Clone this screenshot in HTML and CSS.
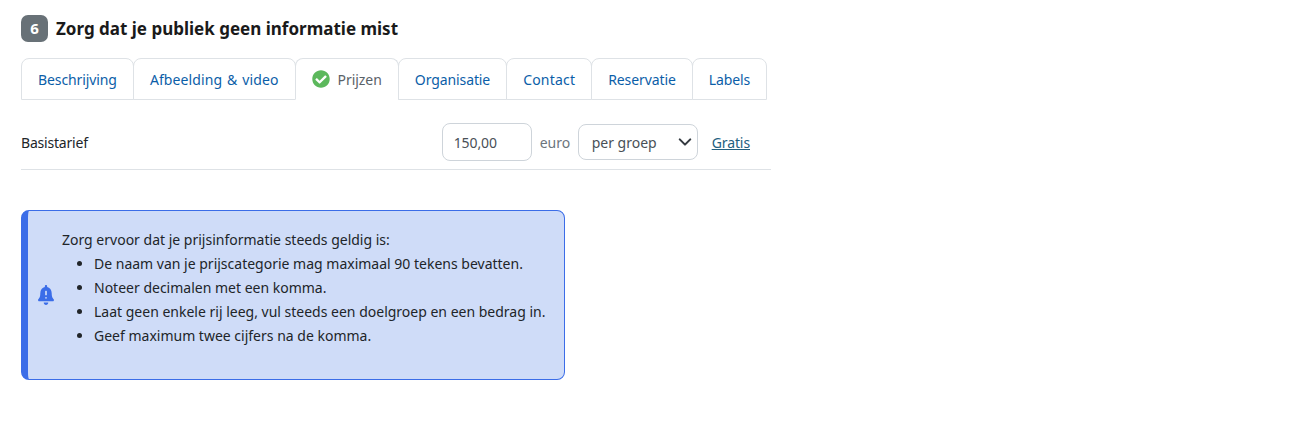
FILE: index.html
```html
<!DOCTYPE html>
<html>
<head>
    <title>Prijzen</title>
    <link rel="stylesheet" href="styles.css">
</head>
<body>

    <div class="container">
        <h2 class="step-title"><span class="step-badge">6</span>Zorg dat je publiek geen informatie mist</h2>

        <ul class="tabs">
            <li class="tab"><a href="#">Beschrijving</a></li>
            <li class="tab tab-media"><a href="#">Afbeelding &amp; video</a></li>
            <li class="tab active">
                <a href="#">
                    <svg class="check-icon" viewBox="0 0 512 512"><path fill="#5cb85c" d="M504 256c0 137-111 248-248 248S8 393 8 256 119 8 256 8s248 111 248 248zM227.3 387.3l184-184c6.2-6.2 6.2-16.4 0-22.6l-22.6-22.6c-6.2-6.2-16.4-6.2-22.6 0L216 308.1l-70.1-70.1c-6.2-6.2-16.4-6.2-22.6 0l-22.6 22.6c-6.2 6.2-6.2 16.4 0 22.6l104 104c6.2 6.2 16.4 6.2 22.6 0z"/></svg>
                    Prijzen
                </a>
            </li>
            <li class="tab"><a href="#">Organisatie</a></li>
            <li class="tab tab-contact"><a href="#">Contact</a></li>
            <li class="tab"><a href="#">Reservatie</a></li>
            <li class="tab"><a href="#">Labels</a></li>
        </ul>

        <div class="price-row">
            <span class="price-label">Basistarief</span>
            <div class="price-fields">
                <input type="text" class="price-input" value="150,00">
                <span class="currency">euro</span>
                <div class="select-box">
                    <span>per groep</span>
                    <svg class="chevron" viewBox="0 0 16 16"><path fill="none" stroke="#343a40" stroke-width="2.400" stroke-linecap="round" stroke-linejoin="round" d="M2 5l6 6 6-6"/></svg>
                </div>
                <a href="#" class="free-link">Gratis</a>
            </div>
        </div>

        <div class="alert">
            <svg class="bell-icon" viewBox="0 0 448 512" preserveAspectRatio="none"><path fill="#3b6de8" d="M224 512c35.300 0 64-28.700 64-64H160c0 35.300 28.700 64 64 64zm215.400-149.700c-19.300-20.800-55.500-52-55.500-154.300 0-77.700-54.500-139.900-127.900-155.200V32c0-17.700-14.300-32-32-32s-32 14.300-32 32v20.800C118.600 68.100 64.100 130.300 64.100 208c0 102.300-36.200 133.500-55.500 154.300-6 6.400-8.700 14.100-8.600 21.700.1 16.400 13 32 32.100 32h383.800c19.100 0 32-15.600 32.100-32 .1-7.600-2.600-15.300-8.600-21.700zM224 352a24 24 0 1 1 0-48 24 24 0 0 1 0 48zm24-104c0 8.800-7.200 16-16 16h-16c-8.800 0-16-7.200-16-16v-88c0-8.800 7.200-16 16-16h16c8.800 0 16 7.200 16 16z"/></svg>
            <div class="alert-text">
                <p>Zorg ervoor dat je prijsinformatie steeds geldig is:</p>
                <ul>
                    <li>De naam van je prijscategorie mag maximaal 90 tekens bevatten.</li>
                    <li>Noteer decimalen met een komma.</li>
                    <li>Laat geen enkele rij leeg, vul steeds een doelgroep en een bedrag in.</li>
                    <li>Geef maximum twee cijfers na de komma.</li>
                </ul>
            </div>
        </div>
    </div>

</body>
</html>
```

FILE: styles.css
```css
body {
    font-family: "Noto Sans", "Open Sans", sans-serif;
    font-size: 14px;
    color: #212529;
    margin: 0;
    background-color: #fff;
}

a {
    text-decoration: none;
}

.container {
    width: 750px;
    padding: 15px 0 0 21px;
}

.step-title {
    display: flex;
    align-items: center;
    height: 27px;
    margin: 0 0 16px 0;
    font-size: 17px;
    font-weight: 700;
    color: #1a1a1a;
}

.step-badge {
    width: 27px;
    height: 27px;
    margin-right: 8px;
    border-radius: 7px;
    background-color: #687177;
    color: #fff;
    font-size: 15px;
    line-height: 27px;
    text-align: center;
}

.tabs {
    display: flex;
    list-style: none;
    margin: 0;
    padding: 0;
    width: 745px;
}

.tab {
    height: 40px;
    margin-left: -1px;
    border: 1px solid #dee2e6;
    border-radius: 8px 8px 0 0;
    box-sizing: content-box;
}

.tab:first-child {
    margin-left: 0;
}

.tab a {
    display: flex;
    align-items: center;
    height: 40px;
    padding: 0 16px;
    color: #0b5ea8;
    letter-spacing: -0.1px;
    white-space: nowrap;
}

.tab-media a {
    letter-spacing: 0.1px;
    word-spacing: 1.2px;
}

.tab-contact a {
    letter-spacing: 0.2px;
}

.tab.active {
    border-bottom-color: #fff;
}

.tab.active a {
    color: #5a6268;
    letter-spacing: -0.05px;
}

.check-icon {
    width: 18px;
    height: 18px;
    margin-right: 8px;
}

.price-row {
    display: flex;
    align-items: center;
    justify-content: space-between;
    padding: 23px 0 8px 0;
    border-bottom: 1px solid #dee2e6;
}

.price-label {
    letter-spacing: -0.2px;
}

.price-fields {
    display: flex;
    align-items: center;
    padding-right: 21px;
}

.price-input {
    width: 90px;
    height: 38px;
    box-sizing: border-box;
    padding: 0 11px;
    border: 1px solid #ced4da;
    border-radius: 8px;
    font-family: inherit;
    font-size: 14px;
    color: #495057;
    letter-spacing: -0.1px;
}

.currency {
    width: 30px;
    margin: 0 8px;
    color: #6c757d;
}

.select-box {
    display: flex;
    align-items: center;
    justify-content: space-between;
    width: 120px;
    height: 36px;
    box-sizing: border-box;
    padding: 0 5px 0 13px;
    border: 1px solid #ced4da;
    border-radius: 8px;
    color: #495057;
}

.chevron {
    width: 14px;
    height: 14px;
}

.free-link {
    margin-left: 14px;
    color: #23607f;
    text-decoration: underline;
    letter-spacing: -0.1px;
}

.alert {
    display: flex;
    align-items: center;
    width: 544px;
    height: 170px;
    box-sizing: border-box;
    margin-top: 40px;
    border: 1px solid #3b6de8;
    border-left-width: 7px;
    border-radius: 8px;
    background-color: #cfdcf8;
}

.bell-icon {
    width: 16px;
    height: 20px;
    margin: 0 8px 0 10px;
    flex-shrink: 0;
}

.alert-text {
    line-height: 24px;
    padding-bottom: 14px;
}

.alert-text p {
    margin: 0;
}

.alert-text ul {
    margin: 0;
    padding-left: 32px;
}
```
